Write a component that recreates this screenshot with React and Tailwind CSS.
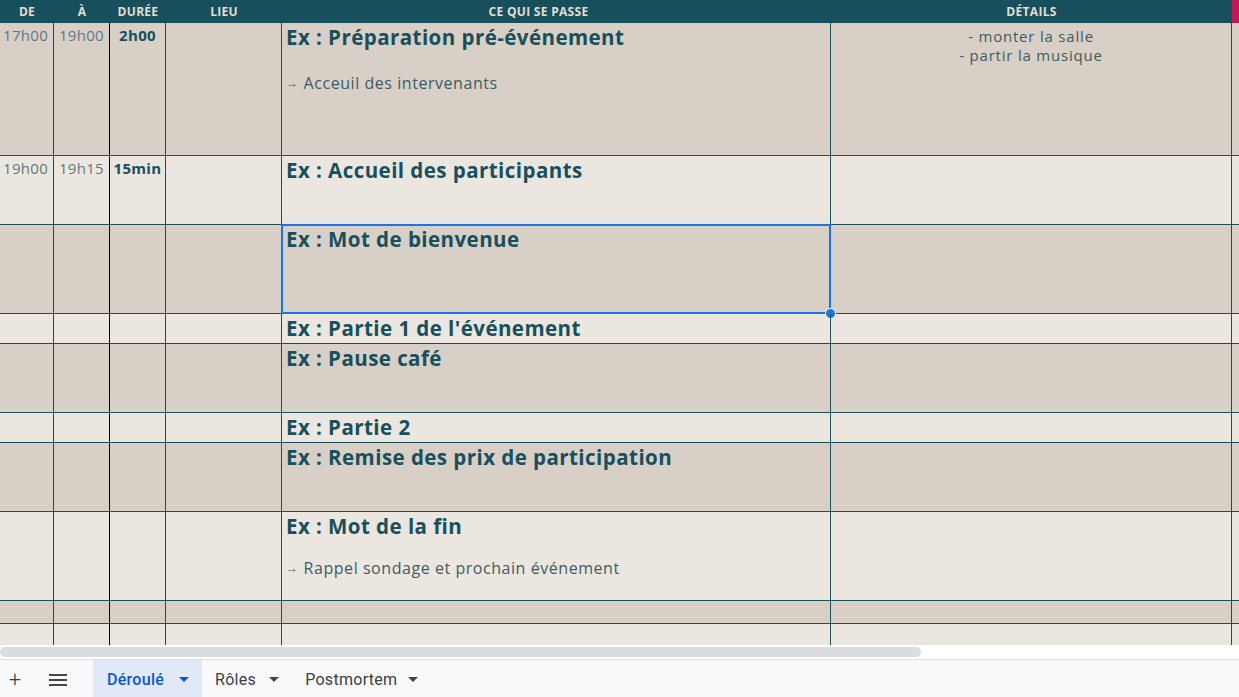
import React from "react";

const rows = [
  { h: "h-[133px]", dark: true, de: "17h00", a: "19h00", duree: "2h00", title: "Ex : Préparation pré-événement", sub: "Acceuil des intervenants", subGap: "mt-[21px]", details: ["- monter la salle", "- partir la musique"] },
  { h: "h-[69px]", dark: false, de: "19h00", a: "19h15", duree: "15min", title: "Ex : Accueil des participants" },
  { h: "h-[89px]", dark: true, title: "Ex : Mot de bienvenue", selected: true },
  { h: "h-[30px]", dark: false, title: "Ex : Partie 1 de l'événement" },
  { h: "h-[69px]", dark: true, title: "Ex : Pause café" },
  { h: "h-[30px]", dark: false, title: "Ex : Partie 2" },
  { h: "h-[69px]", dark: true, title: "Ex : Remise des prix de participation" },
  { h: "h-[89px]", dark: false, title: "Ex : Mot de la fin", sub: "Rappel sondage et prochain événement", subGap: "mt-[17px]" },
  { h: "h-[23px]", dark: true },
  { h: "h-[21px]", dark: false, last: true },
];

const font = { fontFamily: "'Open Sans', 'Noto Sans', sans-serif" };

function Row({ r }) {
  const bg = r.dark ? "bg-[#d8cfc6]" : "bg-[#ebe6e0]";
  const line = r.last ? "" : "border-b border-[#1a4f5a]";
  return (
    <div className={`grid shrink-0 grid-cols-[54px_56px_56px_116px_549px_401px_1fr] ${r.h} ${bg} ${line}`}>
      <div className="border-r border-[#1a4f5a] pl-[3px] pt-[1px] text-[15px] tracking-[0.3px] text-[#5d7a7f]">{r.de}</div>
      <div className="border-r border-black pt-[1px] text-center text-[15px] tracking-[0.3px] text-[#5d7a7f]">{r.a}</div>
      <div className="border-r border-[#1a4f5a] pt-[1px] text-center text-[15px] font-bold tracking-[0.3px] text-[#17505c]">{r.duree}</div>
      <div className="border-r border-[#1a4f5a]"></div>
      <div className="relative border-r border-[#1a4f5a] pl-1 text-[#17505c]">
        {r.title && <div className="pt-[1px] text-[20.5px] leading-[27px] font-bold tracking-[0.45px]">{r.title}</div>}
        {r.sub && (
          <div className={`${r.subGap} flex items-center text-[16px] leading-[22px] tracking-[0.55px] text-[#3e5c63]`}>
            <span className="mr-[5px] text-[12px] leading-none">→</span>
            {r.sub}
          </div>
        )}
        {r.selected && (
          <>
            <div className="absolute -left-px -top-px -right-px -bottom-px border-2 border-[#1a73e8]"></div>
            <div className="absolute -right-[6px] -bottom-[6px] h-[11px] w-[11px] rounded-full border border-white bg-[#1a73e8]"></div>
          </>
        )}
      </div>
      <div className="border-r border-[#1a4f5a] pt-[4px] text-center text-[15px] leading-[19px] tracking-[0.8px] text-[#3e5c63]">
        {r.details && r.details.map((d) => <div key={d}>{d}</div>)}
      </div>
      <div></div>
    </div>
  );
}

export default function App() {
  return (
    <div className="flex h-[697px] w-[1239px] flex-col overflow-hidden bg-white" style={font}>
      <div className="grid h-[23px] shrink-0 grid-cols-[54px_56px_56px_116px_549px_401px_1fr] bg-[#17505c] text-[12px] font-bold leading-[23px] tracking-[0.3px] text-[#e4ddd3]">
        <div className="text-center">DE</div>
        <div className="text-center">À</div>
        <div className="text-center">DURÉE</div>
        <div className="text-center">LIEU</div>
        <div className="pr-[36px] text-center">CE QUI SE PASSE</div>
        <div className="text-center">DÉTAILS</div>
        <div className="bg-[#c2185b]"></div>
      </div>
      {rows.map((r, i) => (
        <Row key={i} r={r} />
      ))}
      <div className="h-[14px] shrink-0 pt-[2px]">
        <div className="h-[10px] w-[921px] rounded-full bg-[#dadce0]"></div>
      </div>
      <div className="flex h-[40px] shrink-0 items-center border-t border-[#e0e0e0] bg-[#f8f9fa] text-[16px] tracking-[0.3px] text-[#3c4043]" style={{ fontFamily: "Roboto, 'Liberation Sans', sans-serif" }}>
        <div className="flex w-[30px] justify-center text-[22px] font-light">+</div>
        <div className="ml-[13px] flex w-[30px] justify-center">
          <svg width="18" height="12" viewBox="0 0 18 12"><path d="M0 1h18M0 6h18M0 11h18" stroke="#444746" strokeWidth="2" /></svg>
        </div>
        <div className="ml-[20px] flex h-full w-[109px] items-center gap-[15px] bg-[#e1e9f7] pl-[14px] font-medium text-[#0b57d0]">
          Déroulé
          <svg width="10" height="5" viewBox="0 0 10 5"><path d="M0 0h10L5 5z" fill="#0b57d0" /></svg>
        </div>
        <div className="flex items-center gap-[13px] pl-[13px]">
          Rôles
          <svg width="10" height="5" viewBox="0 0 10 5"><path d="M0 0h10L5 5z" fill="#444746" /></svg>
        </div>
        <div className="flex items-center gap-[11px] pl-[26px]">
          Postmortem
          <svg width="10" height="5" viewBox="0 0 10 5"><path d="M0 0h10L5 5z" fill="#444746" /></svg>
        </div>
      </div>
    </div>
  );
}
